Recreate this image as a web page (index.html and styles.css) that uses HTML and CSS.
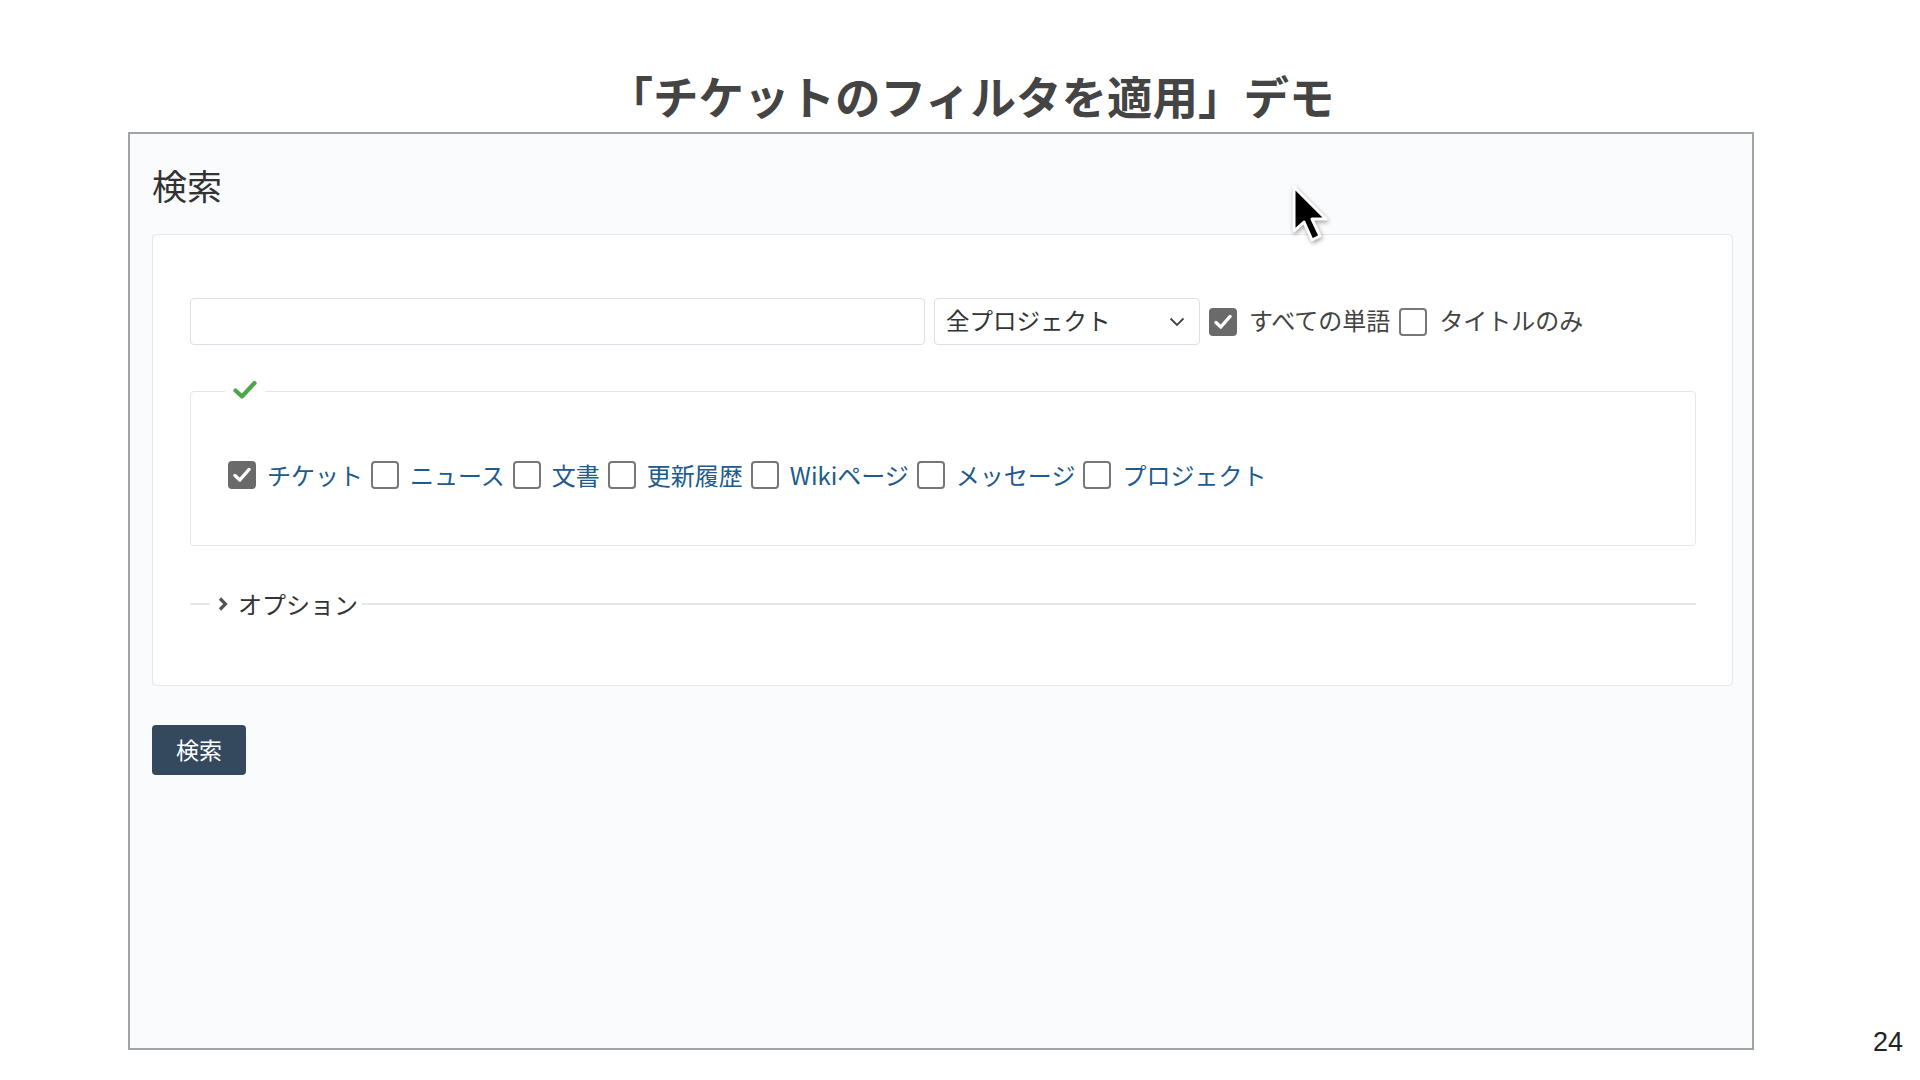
FILE: index.html
```html
<!DOCTYPE html>
<html>
<head>
  <meta charset="utf-8">
  <link rel="stylesheet" href="styles.css">
</head>
<body>
  <h1 class="slide-title">「チケットのフィルタを適用」デモ</h1>

  <div class="frame">
    <h2 class="page-heading">検索</h2>

    <div class="search-box">
      <div class="query-row">
        <div class="query-input"></div>
        <div class="scope-select">
          <span>全プロジェクト</span>
          <svg class="select-arrow" width="16" height="10" viewBox="0 0 16 10">
            <polyline points="1.5,1.5 8,8 14.5,1.5" fill="none" stroke="#444" stroke-width="1.8"/>
          </svg>
        </div>
        <span class="cb checked">
          <svg width="18" height="16" viewBox="0 0 18 16"><path d="M2 8.5 L6.8 13 L16 2.5" fill="none" stroke="#fff" stroke-width="3.4" stroke-linecap="round" stroke-linejoin="round"/></svg>
        </span>
        <span class="opt-label">すべての単語</span>
        <span class="cb"></span>
        <span class="opt-label">タイトルのみ</span>
      </div>

      <div class="types">
        <span class="types-legend">
          <svg width="24" height="20" viewBox="0 0 24 20"><path d="M2.5 10.5 L9 16.5 L21.5 3" fill="none" stroke="#4fa64a" stroke-width="4.2" stroke-linecap="round" stroke-linejoin="round"/></svg>
        </span>
        <div class="types-row">
          <span class="cb checked">
            <svg width="18" height="16" viewBox="0 0 18 16"><path d="M2 8.5 L6.8 13 L16 2.5" fill="none" stroke="#fff" stroke-width="3.4" stroke-linecap="round" stroke-linejoin="round"/></svg>
          </span>
          <a class="type-link">チケット</a>
          <span class="cb"></span>
          <a class="type-link">ニュース</a>
          <span class="cb"></span>
          <a class="type-link">文書</a>
          <span class="cb"></span>
          <a class="type-link">更新履歴</a>
          <span class="cb"></span>
          <a class="type-link">Wikiページ</a>
          <span class="cb"></span>
          <a class="type-link">メッセージ</a>
          <span class="cb"></span>
          <a class="type-link">プロジェクト</a>
        </div>
      </div>

      <div class="options-row">
        <span class="rule short"></span>
        <svg class="options-arrow" width="12" height="16" viewBox="0 0 12 16">
          <polyline points="3,2.5 8.5,8 3,13.5" fill="none" stroke="#555" stroke-width="3.2"/>
        </svg>
        <span class="options-label">オプション</span>
        <span class="rule"></span>
      </div>
    </div>

    <button class="btn-search">検索</button>

    <svg class="cursor" width="40" height="62" viewBox="0 0 40 62">
      <path d="M3 3 L3 47 L13 38 L21 56 L29 52 L21 35 L35 35 Z" fill="#000" stroke="#fff" stroke-width="3" stroke-linejoin="round"/>
    </svg>
  </div>

  <div class="page-num">24</div>
</body>
</html>
```

FILE: styles.css
```css
body {
  margin: 0;
  width: 1920px;
  height: 1080px;
  position: relative;
  background: #fff;
  font-family: "Noto Sans CJK JP", "Noto Sans", sans-serif;
  color: #333;
  overflow: hidden;
}

.slide-title {
  margin: 0;
  padding: 69px 0 0 22px;
  height: 63px;
  line-height: 52px;
  text-align: center;
  font-size: 45.5px;
  font-weight: bold;
  color: #444;
}

.frame {
  position: relative;
  box-sizing: border-box;
  margin-left: 128px;
  width: 1626px;
  height: 918px;
  padding: 30px 19px 0 22px;
  border: 2px solid #a3a3a3;
  background: #fafbfd;
}

.page-heading {
  margin: 0;
  font-size: 35px;
  line-height: 42px;
  font-weight: normal;
  color: #333;
}

.search-box {
  box-sizing: border-box;
  margin-top: 28px;
  height: 452px;
  padding: 63px 36px 0 37px;
  border: 1px solid #e3e6ea;
  border-radius: 4px;
  background: #fff;
}

.query-row {
  display: flex;
  align-items: center;
  height: 47px;
}

.query-input {
  box-sizing: border-box;
  width: 735px;
  height: 47px;
  border: 1px solid #dde1e7;
  border-radius: 4px;
  background: #fff;
}

.scope-select {
  box-sizing: border-box;
  display: flex;
  align-items: center;
  justify-content: space-between;
  width: 266px;
  height: 47px;
  margin-left: 9px;
  padding: 0 14px 4px 11px;
  border: 1px solid #dde1e7;
  border-radius: 4px;
  font-size: 23.5px;
  color: #333;
}

.select-arrow {
  margin-top: 4px;
}

.cb {
  box-sizing: border-box;
  display: inline-flex;
  align-items: center;
  justify-content: center;
  flex: none;
  width: 28px;
  height: 28px;
  border: 2px solid #777;
  border-radius: 4px;
  background: #fff;
}

.cb.checked {
  border-color: #6a6a6a;
  background: #6a6a6a;
}

.query-row .cb {
  margin-left: 9px;
}

.opt-label {
  margin: 0 0 4px 12px;
  font-size: 24px;
  color: #444;
}

.types {
  position: relative;
  box-sizing: border-box;
  margin-top: 46px;
  height: 155px;
  padding: 69px 0 0 37px;
  border: 1px solid #e3e6ea;
  border-radius: 4px;
}

.types-legend {
  position: absolute;
  top: -12px;
  left: 34px;
  padding: 0 8px;
  background: #fff;
  line-height: 0;
}

.types-row {
  display: flex;
  align-items: center;
  height: 28px;
}

.types-row .cb {
  margin-left: 8px;
}

.types-row .cb:first-child {
  margin-left: 0;
}

.type-link {
  margin: 0 0 2px 11px;
  font-size: 24px;
  color: #215a8c;
}

.options-row {
  display: flex;
  align-items: center;
  height: 28px;
  margin-top: 44px;
}

.rule {
  flex: 1;
  height: 2px;
  background: #e6e8eb;
}

.rule.short {
  flex: none;
  width: 20px;
}

.options-arrow {
  margin-left: 7px;
}

.options-label {
  margin: 0 4px 2px 9px;
  font-size: 24px;
  color: #333;
}

.btn-search {
  display: block;
  margin-top: 39px;
  width: 94px;
  height: 50px;
  padding: 0 0 2px;
  border: none;
  border-radius: 4px;
  background: #34495e;
  color: #fff;
  font-family: inherit;
  font-size: 23px;
}

.cursor {
  position: absolute;
  left: 1161px;
  top: 50px;
  filter: drop-shadow(1px 2px 2px rgba(0,0,0,0.35));
}

.page-num {
  position: absolute;
  left: 1873px;
  top: 1027px;
  font-family: "Liberation Sans", sans-serif;
  font-size: 27px;
  color: #222;
}
```
